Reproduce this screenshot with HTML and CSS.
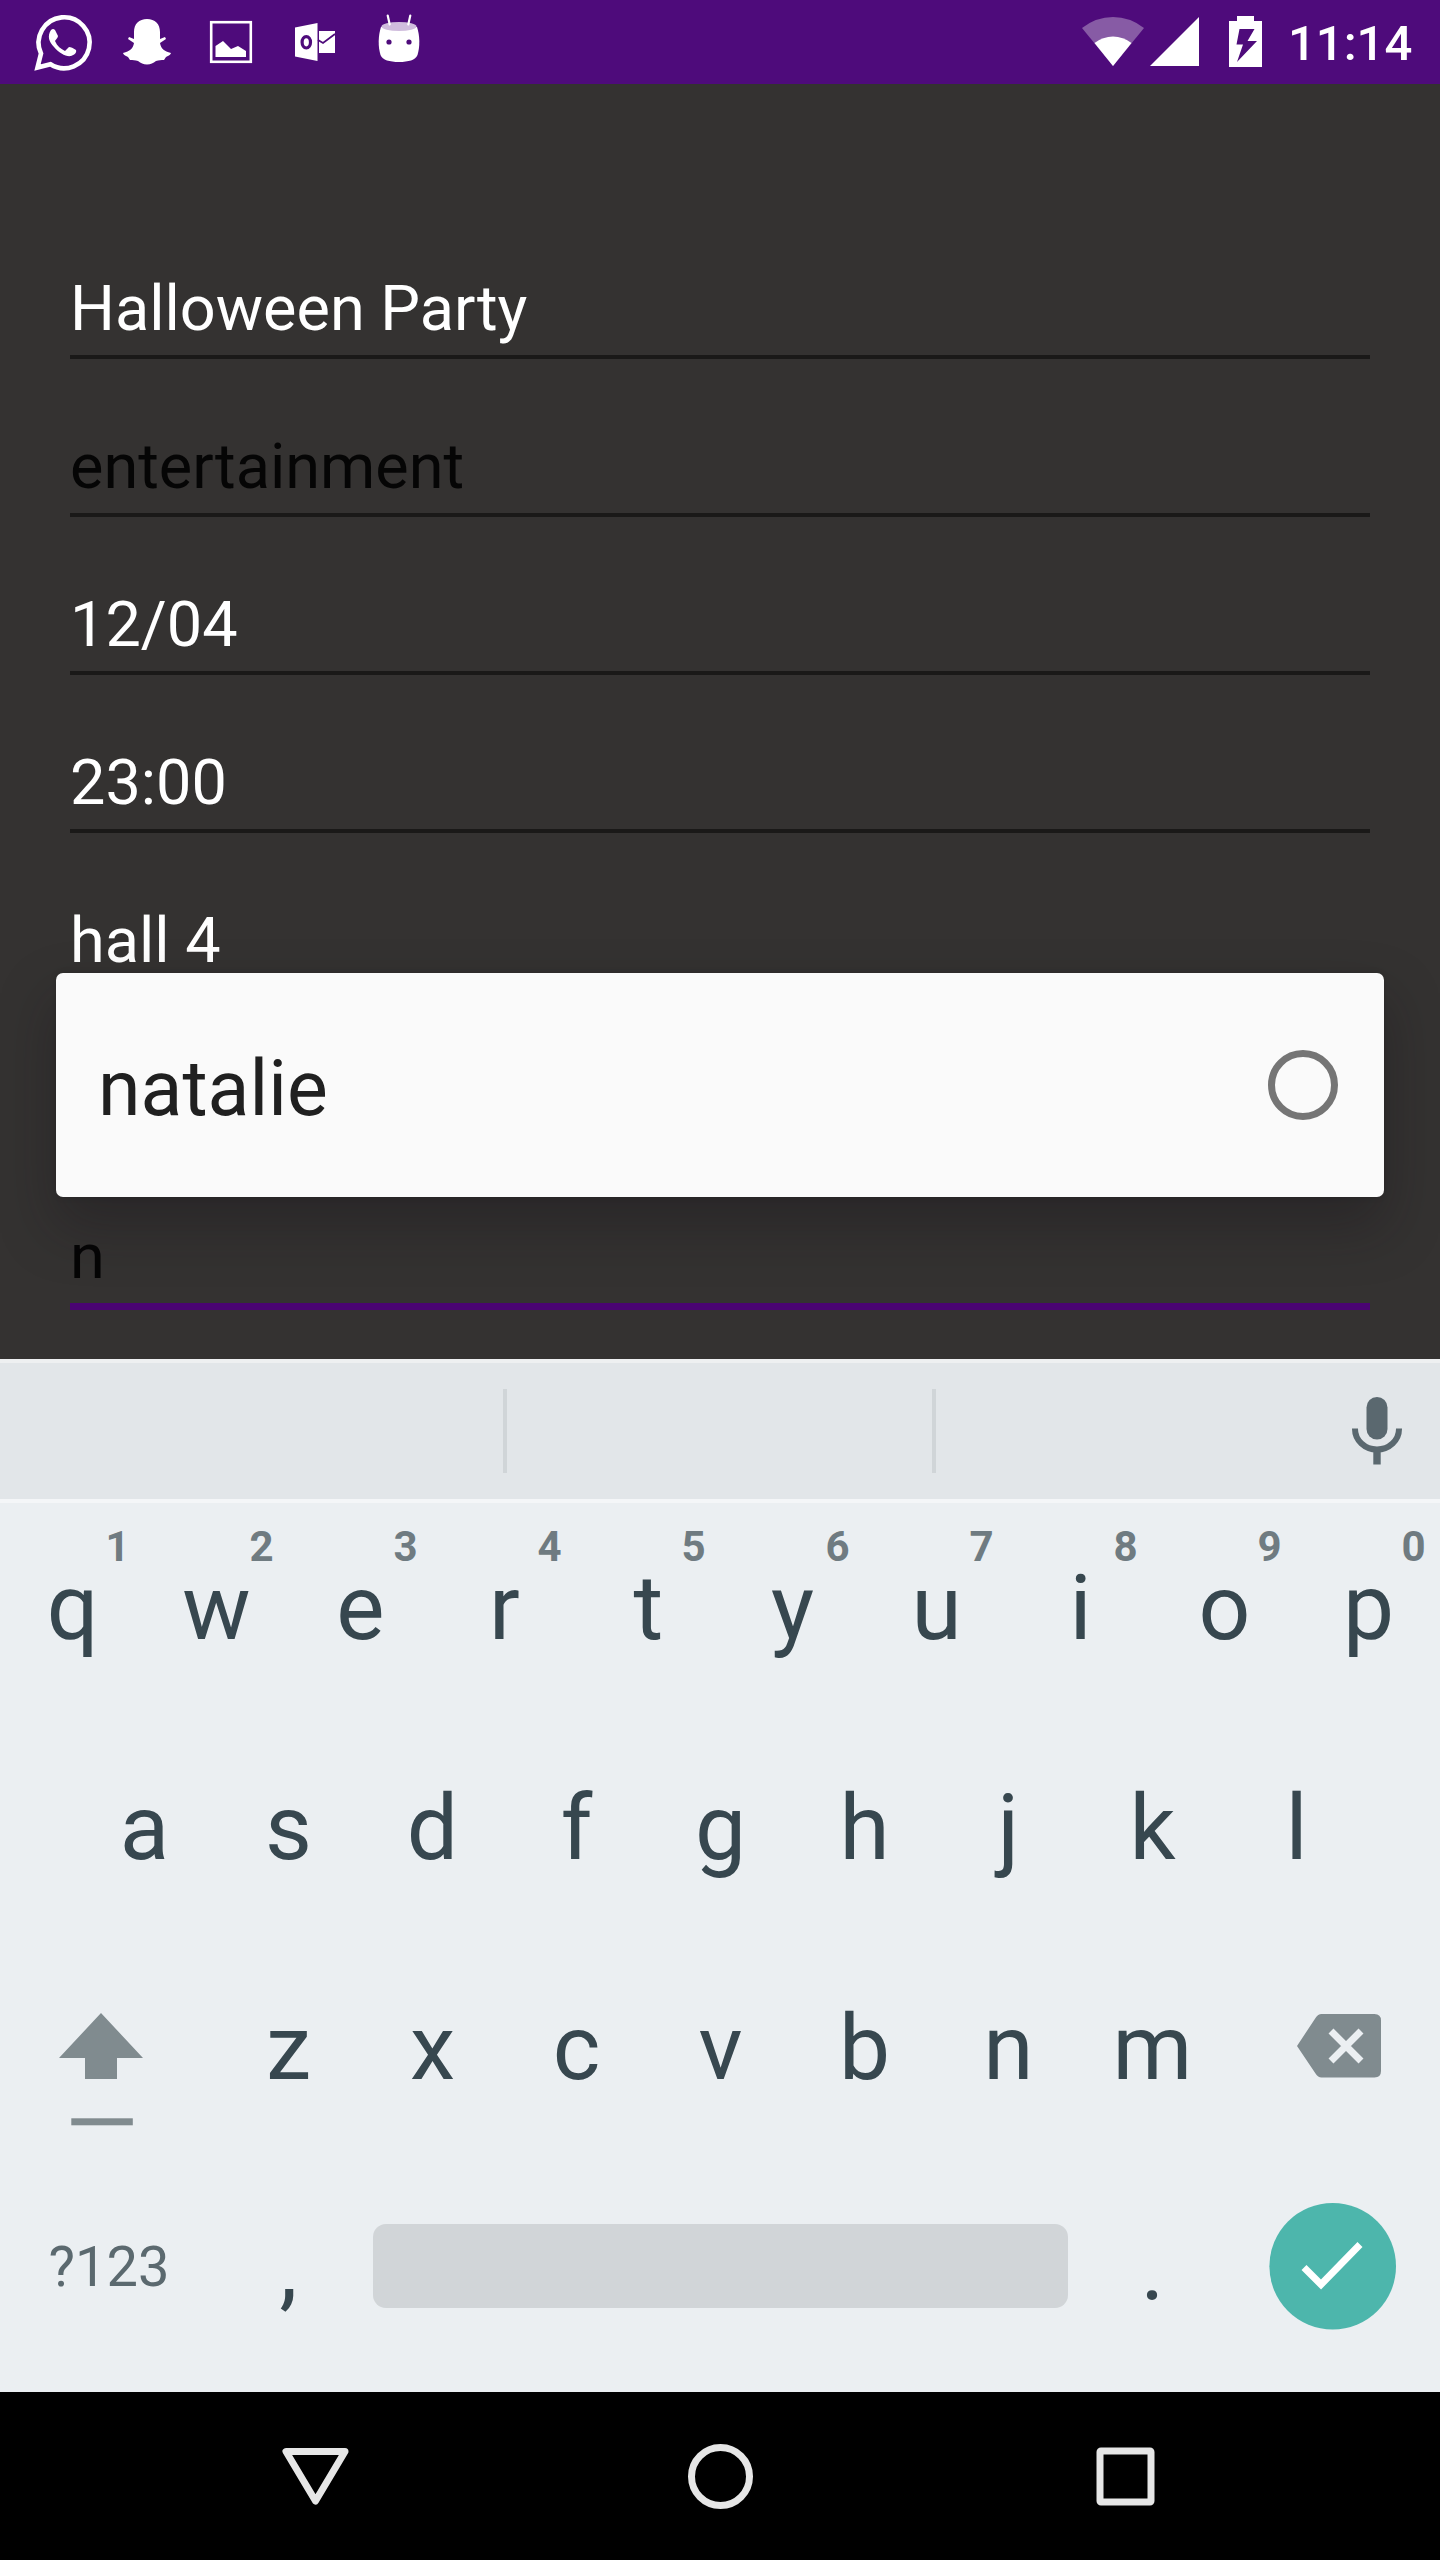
FILE: index.html
```
<!DOCTYPE html>
<html>
<head>
    <meta charset="utf-8">
    <meta content="width=device-width,initial-scale=1.0" name="viewport">
    <title>New event</title>
    <link rel="stylesheet" href="styles.css">
</head>
<body>
<!-- status bar -->
<header class="status-bar">
    <div class="status-left">
        <svg class="status-icon" viewBox="21 0 84 84">
            <path d="M37.500 67.500L41 53.500A25.500 25.500 0 1 1 50.500 64.300Z" fill="none" stroke="#fff" stroke-width="4.600"/>
            <path d="M51 30c2-2 4-1 5 2l2 4c0 2-2 3-3 5 2 5 6 8 10 10l4-4c2 0 4 1 7 3 1 3-2 5-5 6-5 1-12-3-17-9-5-5-7-11-3-17z" fill="#fff"/>
        </svg>
        <svg class="status-icon" viewBox="105 0 84 84">
            <path d="M147 19c8 0 13 5 13 13v7l5-2 1 2-6 4c1 6 4 8 11 10-1 3-4 3-5 4l-2 3c-3 0-5 0-8 1-3 2-5 3.500-9 3.500s-6-1.500-9-3.500c-3-1-5-1-8-1l-2-3c-1-1-4-1-5-4 7-2 10-4 11-10l-6-4 1-2 5 2v-7c0-8 5-13 13-13z" fill="#fff"/>
        </svg>
        <svg class="status-icon" viewBox="189 0 84 84">
            <rect x="211.200" y="22.200" width="39.600" height="39.600" fill="none" stroke="#fff" stroke-width="2.600"/>
            <path d="M215.500 57V46l7.500-5 8 8 7-3 8 5v6z" fill="#fff"/>
        </svg>
        <svg class="status-icon" viewBox="273 0 84 84">
            <path d="M295 27.500L317.500 23v38L295 56.500z" fill="#fff"/>
            <ellipse cx="306.300" cy="42.300" rx="4.200" ry="5.700" fill="none" stroke="#4e0b7b" stroke-width="3.200"/>
            <rect x="319" y="31" width="16" height="22" fill="#fff"/>
            <path d="M318 40l5 3 12-9" fill="none" stroke="#4e0b7b" stroke-width="1.800"/>
        </svg>
        <svg class="status-icon" viewBox="357 0 84 84">
            <path d="M381 27c-3 9-3 20-.500 28 2 5 9 7 18.500 7s16.500-2 18.500-7c2.500-8 2.500-19-.500-28z" fill="#fff"/>
            <ellipse cx="399" cy="26.500" rx="17.500" ry="4.500" fill="#d0bddd"/>
            <path d="M387.700 15.500l2 9M410.300 15.500l-2 9" stroke="#fff" stroke-width="2.200" stroke-linecap="round"/>
            <circle cx="389" cy="42" r="2.600" fill="#4e0b7b"/>
            <circle cx="409" cy="42" r="2.600" fill="#4e0b7b"/>
        </svg>
    </div>
    <div class="status-right">
        <svg class="status-signal" viewBox="1075 0 200 84">
            <path d="M1113 66L1082 28Q1096 17 1113 17T1144 28z" fill="#875ba5"/>
            <path d="M1113 66L1094.500 43Q1103 36.500 1113 36.500T1131.500 43z" fill="#fff"/>
            <path d="M1199 17v49h-49z" fill="#fff"/>
            <path d="M1237 16h17v5h8v46h-33V21h8z" fill="#fff"/>
            <path d="M1239.500 29h15l-7 12h9.500l-20 21 6-17.500h-6.500z" fill="#4e0b7b"/>
        </svg>
        <span class="clock">11:14</span>
    </div>
</header>

<!-- event form -->
<section class="form">
    <div class="field">Halloween Party</div>
    <div class="field field-dark">entertainment</div>
    <div class="field">12/04</div>
    <div class="field">23:00</div>
    <div class="field">hall 4</div>
    <div class="field"></div>
    <div class="field field-dark field-focus">n</div>
    <div class="dropdown">
        <span class="dropdown-name">natalie</span>
        <span class="radio"></span>
    </div>
</section>

<!-- keyboard -->
<section class="keyboard">
    <div class="suggest">
        <div class="suggest-item suggest-first"></div>
        <div class="suggest-item"></div>
        <svg class="mic" viewBox="0 0 50 68">
            <rect x="14.500" y="0" width="21" height="42.500" rx="10.500" fill="#5a686f"/>
            <path d="M3 31.500v.500a22 20.500 0 0 0 44 0v-.500" fill="none" stroke="#5a686f" stroke-width="6"/>
            <rect x="21.300" y="54" width="7.400" height="13.500" fill="#5a686f"/>
        </svg>
    </div>
    <div class="keys">
        <div class="row">
            <div class="key">q<span class="num">1</span></div>
            <div class="key">w<span class="num">2</span></div>
            <div class="key">e<span class="num">3</span></div>
            <div class="key">r<span class="num">4</span></div>
            <div class="key">t<span class="num">5</span></div>
            <div class="key">y<span class="num">6</span></div>
            <div class="key">u<span class="num">7</span></div>
            <div class="key">i<span class="num">8</span></div>
            <div class="key">o<span class="num">9</span></div>
            <div class="key">p<span class="num">0</span></div>
        </div>
        <div class="row">
            <div class="key">a</div>
            <div class="key">s</div>
            <div class="key">d</div>
            <div class="key">f</div>
            <div class="key">g</div>
            <div class="key">h</div>
            <div class="key">j</div>
            <div class="key">k</div>
            <div class="key">l</div>
        </div>
        <div class="row">
            <div class="key key-wide">
                <svg class="key-icon" viewBox="0 1943 216 212">
                    <path d="M101 2013l42 45h-26v21H85v-21H59z" fill="#808b8f"/>
                    <rect x="71.300" y="2118.300" width="61.500" height="7" fill="#808b8f"/>
                </svg>
            </div>
            <div class="key">z</div>
            <div class="key">x</div>
            <div class="key">c</div>
            <div class="key">v</div>
            <div class="key">b</div>
            <div class="key">n</div>
            <div class="key">m</div>
            <div class="key key-wide">
                <svg class="key-icon" viewBox="1224 1943 216 212">
                    <path d="M1297 2046l18.500-28q2.500-4 6-4h53q6.500 0 6.500 6.500v50.500q0 6.500-6.500 6.500h-53q-3.500 0-6-4z" fill="#808b8f"/>
                    <path d="M1331 2031l30 30M1361 2031l-30 30" stroke="#ebeff2" stroke-width="7"/>
                </svg>
            </div>
        </div>
        <div class="row">
            <div class="key key-wide key-sym">?123</div>
            <div class="key">,</div>
            <div class="key key-space"><span class="space"></span></div>
            <div class="key">.</div>
            <div class="key key-wide">
                <svg class="key-icon" viewBox="1224 2163 216 212">
                    <circle cx="1332.700" cy="2266.300" r="63.300" fill="#4db6ac"/>
                    <path d="M1304 2267.500l17 17 39-40" fill="none" stroke="#fff" stroke-width="7"/>
                </svg>
            </div>
        </div>
    </div>
</section>

<!-- navigation bar -->
<nav class="nav-bar">
    <svg class="nav-icon" viewBox="0 0 70 70">
        <path d="M6 10.500h59L35.500 60z" fill="none" stroke="#e6e6e6" stroke-width="7" stroke-linejoin="round"/>
    </svg>
    <svg class="nav-icon" viewBox="0 0 70 70">
        <circle cx="35.500" cy="35.500" r="29" fill="none" stroke="#e6e6e6" stroke-width="7"/>
    </svg>
    <svg class="nav-icon" viewBox="0 0 70 70">
        <rect x="10" y="10" width="51" height="51" rx="1" fill="none" stroke="#e6e6e6" stroke-width="7" stroke-linejoin="round"/>
    </svg>
</nav>
</body>
</html>
```

FILE: styles.css
```
body{
	margin: 0;
	width: 1440px;
	height: 2560px;
	overflow: hidden;
	display: flex;
	flex-direction: column;
	font-family: Roboto, "Noto Sans", sans-serif;
	background: #343231;
}
svg{display: block;}
.status-bar{
	height: 84px;
	display: flex;
	justify-content: space-between;
	background: #4e0b7b;
}
.status-left{
	display: flex;
	padding-left: 21px;
}
.status-icon{
	width: 84px;
	height: 84px;
}
.status-right{
	display: flex;
	width: 365px;
}
.status-signal{
	width: 200px;
	height: 84px;
}
.clock{
	padding-left: 13px;
	font-size: 49px;
	font-weight: 500;
	line-height: 88px;
	color: #fff;
}
.form{
	position: relative;
	box-sizing: border-box;
	height: 1275px;
	padding: 117px 70px 0;
}
.field{
	box-sizing: border-box;
	height: 158px;
	padding-top: 58px;
	font-size: 63px;
	line-height: 100px;
	color: #fff;
	background: linear-gradient(#1a1918, #1a1918) 0 154px / 100% 4px no-repeat;
}
.field-dark{color: #050505;}
.field-focus{
	background: linear-gradient(#4a0472, #4a0472) 0 154px / 100% 7px no-repeat;
	height: 161px;
}
/* suggestion popup over the form */
.dropdown{
	position: absolute;
	top: 889px;
	left: 56px;
	right: 56px;
	height: 224px;
	box-sizing: border-box;
	padding: 0 46px 0 42px;
	display: flex;
	align-items: center;
	justify-content: space-between;
	border-radius: 7px;
	background: #fafafa;
	box-shadow: 0 28px 56px rgba(20,18,24,.34), 0 0 6px rgba(0,0,0,.15);
}
.dropdown-name{
	font-size: 77px;
	line-height: 120px;
	padding-top: 8px;
	color: #202020;
}
.radio{
	box-sizing: border-box;
	width: 70px;
	height: 70px;
	border: 7px solid #757575;
	border-radius: 50%;
}
.keyboard{
	position: relative;
	height: 1033px;
	background: #ebeff2;
}
.suggest{
	box-sizing: border-box;
	height: 144px;
	display: flex;
	align-items: center;
	border-top: 4px solid #eef0f1;
	border-bottom: 4px solid #f4f6f8;
	background: #e2e6e9;
}
.suggest-item{
	box-sizing: border-box;
	width: 429px;
	height: 84px;
	border-right: 4px solid #d0d5d8;
}
.suggest-first{width: 507px;}
.mic{
	width: 50px;
	height: 68px;
	margin-left: 416px;
}
.row{
	display: flex;
	justify-content: center;
	height: 220px;
}
.key{
	position: relative;
	width: 144px;
	height: 212px;
	text-align: center;
	text-indent: 1px;
	font-size: 91px;
	line-height: 211px;
	color: #37474f;
}
.key-wide{width: 216px;}
.num{
	position: absolute;
	top: 24px;
	left: 87px;
	width: 60px;
	font-size: 42px;
	font-weight: 700;
	line-height: 40px;
	color: #6f7b81;
}
.key-icon{
	width: 216px;
	height: 212px;
}
.key-sym{
	font-size: 56px;
	line-height: 209px;
	text-indent: 2px;
	color: #5b696f;
}
.key-space{
	display: flex;
	align-items: center;
	justify-content: center;
	width: 720px;
	height: 206px;
}
.space{
	width: 695px;
	height: 84px;
	border-radius: 13px;
	background: #d1d5d8;
}
.nav-bar{
	height: 168px;
	display: flex;
	align-items: center;
	justify-content: center;
	gap: 335px;
	background: #000;
}
.nav-icon{
	width: 70px;
	height: 70px;
}
```
